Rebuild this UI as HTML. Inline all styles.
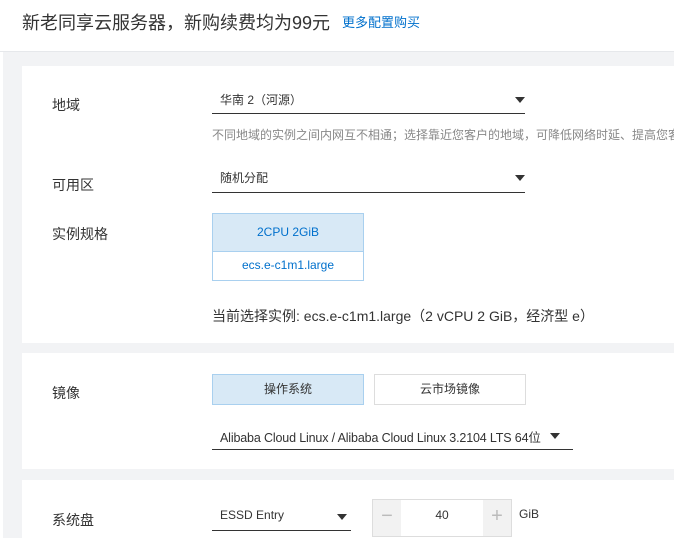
<!DOCTYPE html>
<html><head><meta charset="utf-8"><style>
*{margin:0;padding:0;box-sizing:border-box}
body{width:674px;height:538px;overflow:hidden;background:#f2f3f5;font-family:"Liberation Sans","Noto Sans CJK SC",sans-serif;color:#333;position:relative}
.a{position:absolute;white-space:nowrap}
.top{position:absolute;left:0;top:0;width:674px;height:52px;background:#fff;border-bottom:1px solid #e6e8eb}
.panel{position:absolute;left:22px;width:652px;background:#fff}
.lbl{font-size:14px;color:#333}
.sel{position:absolute;border-bottom:1px solid #333;font-size:12px}
.arr{position:absolute;width:0;height:0;border-left:5px solid transparent;border-right:5px solid transparent;border-top:6px solid #333}
</style></head><body>
<div class="a" style="left:0;top:52px;width:3px;height:486px;background:#fff"></div>
<div class="top">
<div class="a" style="left:22px;top:9px;font-size:18px;color:#333">新老同享云服务器，新购续费均为99元</div>
<div class="a" style="left:342px;top:12px;font-size:13px;color:#0070cc">更多配置购买</div>
</div>
<div class="panel" style="top:66px;height:277px"></div>
<div class="panel" style="top:353px;height:116px"></div>
<div class="panel" style="top:480px;height:58px"></div>

<div class="a lbl" style="left:52px;top:95px">地域</div>
<div class="sel" style="left:212px;top:90px;width:313px;height:24px"><span class="a" style="left:8px;top:1px">华南 2（河源）</span></div>
<div class="arr" style="left:515px;top:97px"></div>
<div class="a" style="left:212px;top:126px;width:462px;overflow:hidden;font-size:12px;color:#888">不同地域的实例之间内网互不相通；选择靠近您客户的地域，可降低网络时延、提高您客户的访问速度。</div>

<div class="a lbl" style="left:52px;top:175px">可用区</div>
<div class="sel" style="left:212px;top:168px;width:313px;height:25px"><span class="a" style="left:8px;top:1px">随机分配</span></div>
<div class="arr" style="left:515px;top:175px"></div>

<div class="a lbl" style="left:52px;top:224px">实例规格</div>
<div class="a" style="left:212px;top:213px;width:152px;height:68px;border:1px solid #a9d0ef;background:#fff"></div>
<div class="a" style="left:212px;top:213px;width:152px;height:39px;border:1px solid #a9d0ef;background:#d8e9f6;font-size:12px;color:#0070cc;text-align:center;line-height:37px">2CPU 2GiB</div>
<div class="a" style="left:212px;top:258px;width:152px;font-size:12px;color:#0070cc;text-align:center">ecs.e-c1m1.large</div>
<div class="a" style="left:212px;top:306px;font-size:14px">当前选择实例: ecs.e-c1m1.large（2 vCPU 2 GiB，经济型 e）</div>

<div class="a lbl" style="left:52px;top:383px">镜像</div>
<div class="a" style="left:212px;top:374px;width:152px;height:31px;border:1px solid #a9d0ef;background:#d8e9f6;font-size:12px;text-align:center;line-height:29px">操作系统</div>
<div class="a" style="left:374px;top:374px;width:152px;height:31px;border:1px solid #ddd;background:#fff;font-size:12px;text-align:center;line-height:29px">云市场镜像</div>
<div class="sel" style="left:212px;top:424px;width:361px;height:26px;font-size:12.5px"><span class="a" style="left:8px;top:3px;letter-spacing:-0.15px">Alibaba Cloud Linux / Alibaba Cloud Linux 3.2104 LTS 64位</span></div>
<div class="arr" style="left:550px;top:433px"></div>

<div class="a lbl" style="left:52px;top:510px">系统盘</div>
<div class="sel" style="left:212px;top:505px;width:139px;height:26px"><span class="a" style="left:8px;top:3px">ESSD Entry</span></div>
<div class="arr" style="left:337px;top:514px"></div>
<div class="a" style="left:372px;top:499px;width:140px;height:38px;border:1px solid #ddd;background:#fff"></div>
<div class="a" style="left:373px;top:500px;width:28px;height:36px;background:#f2f2f2;color:#bbb;font-size:20px;text-align:center;line-height:32px">−</div>
<div class="a" style="left:483px;top:500px;width:28px;height:36px;background:#f2f2f2;color:#bbb;font-size:20px;text-align:center;line-height:32px">+</div>
<div class="a" style="left:401px;top:508px;width:82px;text-align:center;font-size:12px">40</div>
<div class="a" style="left:519px;top:507px;font-size:12px">GiB</div>
</body></html>
